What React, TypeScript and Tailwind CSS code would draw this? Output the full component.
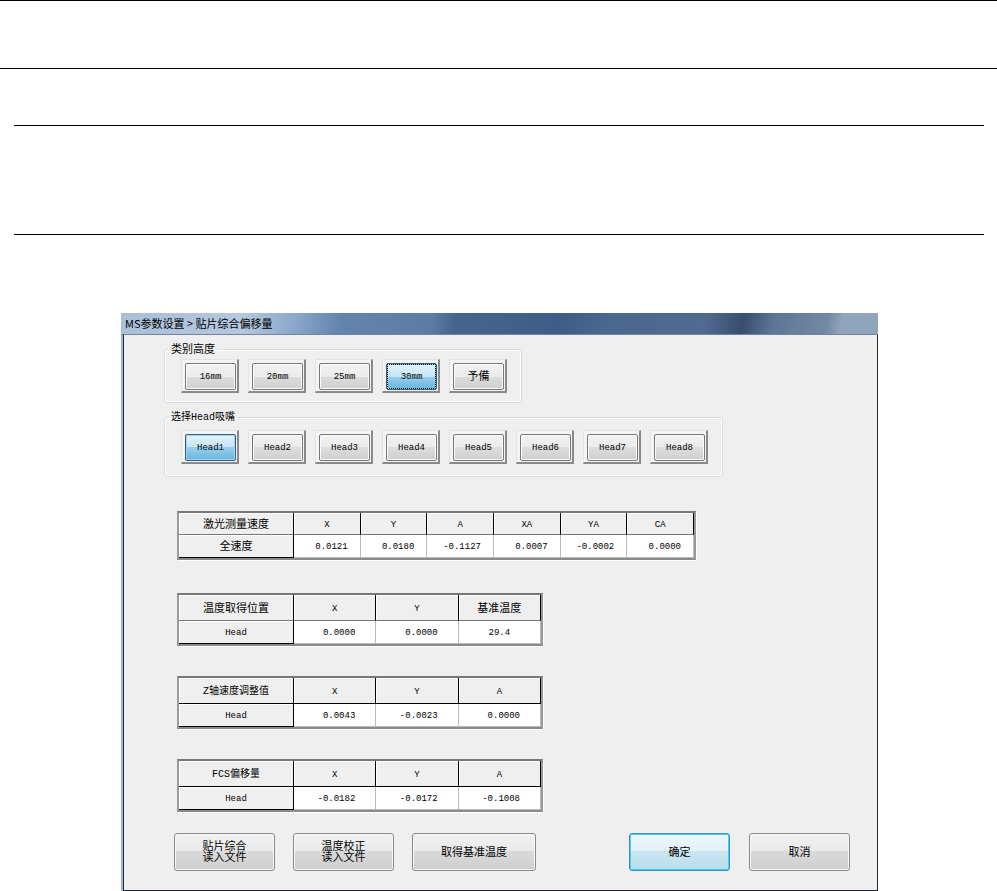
import { useState } from "react";
import clsx from "clsx";

const heights = ["16mm", "20mm", "25mm", "30mm", "予備"];
const heads = ["Head1", "Head2", "Head3", "Head4", "Head5", "Head6", "Head7", "Head8"];

type OffsetTable = {
  title: string;
  row: string;
  columns: string[];
  values: string[];
  // the full speed table is lower and has narrower columns
  compact?: boolean;
  blackRule?: boolean;
};

const tables: OffsetTable[] = [
  {
    title: "激光测量速度",
    row: "全速度",
    columns: ["X", "Y", "A", "XA", "YA", "CA"],
    values: ["0.0121", "0.0180", "-0.1127", "0.0007", "-0.0002", "0.0000"],
    compact: true
  },
  {
    title: "温度取得位置",
    row: "Head",
    columns: ["X", "Y", "基准温度"],
    values: ["0.0000", "0.0000", "29.4"]
  },
  {
    title: "Z轴速度调整值",
    row: "Head",
    columns: ["X", "Y", "A"],
    values: ["0.0043", "-0.0023", "0.0000"],
    blackRule: true
  },
  {
    title: "FCS偏移量",
    row: "Head",
    columns: ["X", "Y", "A"],
    values: ["-0.0182", "-0.0172", "-0.1008"],
    blackRule: true
  }
];

// Pure Latin text runs narrower than the Chinese labels, mixed text sits between.
function textSize(text: string) {
  if (/^[\x20-\x7f]+$/.test(text)) return "text-[9px]";
  return /[A-Za-z]/.test(text) ? "text-[10px]" : "text-[11px]";
}

function ToggleButton({
  label,
  pressed,
  focused,
  onClick
}: {
  label: string;
  pressed: boolean;
  focused?: boolean;
  onClick: () => void;
}) {
  return (
    <button
      type="button"
      aria-pressed={pressed}
      onClick={onClick}
      className="h-[34px] w-[58px] shrink-0 border-t border-r-2 border-b-2 border-l border-t-[#e3e3e3] border-r-[#8a8a8a] border-b-[#8a8a8a] border-l-[#e3e3e3] bg-[#f4f4f4] pt-[3px] pr-[1px] pb-[1px] pl-[3px]"
    >
      <span
        className={clsx(
          "flex h-full w-full items-center justify-center rounded-[2px] border pt-0.5",
          textSize(label),
          pressed
            ? "border-[#2c628b] bg-[linear-gradient(#e5f4fc,#c4e5f6_50%,#98d1ef_50%,#68b3db)] shadow-[inset_0_0_0_1px_#a5d2ec]"
            : "border-[#777777] bg-[linear-gradient(#f2f2f2,#ebebeb_50%,#dddddd_50%,#cfcfcf)] shadow-[inset_0_0_0_1px_#fafafa]",
          focused && "outline-1 -outline-offset-2 outline-dotted outline-black"
        )}
      >
        {label}
      </span>
    </button>
  );
}

function ButtonGroup({
  legend,
  options,
  value,
  onChange,
  focused,
  className
}: {
  legend: string;
  options: string[];
  value: string;
  onChange: (value: string) => void;
  focused?: boolean;
  className: string;
}) {
  return (
    <fieldset
      className={clsx(
        "ml-10 w-fit rounded-[3px] border border-[#d5dfe5] pr-[14px] pl-4 shadow-[inset_0_0_0_1px_#ffffff]",
        className
      )}
    >
      <legend className={clsx("-ml-3 px-[2px] pt-0.5 leading-[14px]", textSize(legend))}>{legend}</legend>
      <div className="flex gap-[9px]">
        {options.map((option) => (
          <ToggleButton
            key={option}
            label={option}
            pressed={option === value}
            focused={focused && option === value}
            onClick={() => onChange(option)}
          />
        ))}
      </div>
    </fieldset>
  );
}

function DataTable({ title, row, columns, values, compact, blackRule }: OffsetTable) {
  const rule = blackRule ? "border-b-black" : "border-b-[#777777]";
  const header =
    "border-r border-b border-r-black shadow-[inset_1px_1px_0_#ffffff] font-normal leading-4 p-0 pt-0.5";

  return (
    <div
      className={clsx(
        "border-2 border-t-[#777777] border-r-[#999999] border-b-[#8a8a8a] border-l-[#9a9a9a] shadow-[1px_1px_0_#ffffff]",
        compact ? "mb-[3px] w-[519px]" : "w-[366px]"
      )}
    >
      <table className="w-full table-fixed border-separate border-spacing-0">
        <thead>
          <tr className={compact ? "h-[22px]" : "h-[26px]"}>
            <th scope="col" className={clsx("w-[115px]", header, rule, textSize(title))}>
              {title}
            </th>
            {columns.map((column) => (
              <th key={column} scope="col" className={clsx(header, rule, textSize(column))}>
                {column}
              </th>
            ))}
          </tr>
        </thead>
        <tbody>
          <tr className="h-[23px]">
            <th scope="row" className={clsx(header, "border-b-black", textSize(row))}>
              {row}
            </th>
            {values.map((value, i) => (
              <td
                key={columns[i]}
                className={clsx(
                  "border-r border-b border-[#bbbbbb] bg-white p-0 pt-0.5 text-[9px] leading-4",
                  columns[i] === "基准温度" ? "text-center" : compact ? "pr-3 text-right" : "pr-5 text-right"
                )}
              >
                {value}
              </td>
            ))}
          </tr>
        </tbody>
      </table>
    </div>
  );
}

function PushButton({ lines, primary, wide }: { lines: string[]; primary?: boolean; wide?: boolean }) {
  return (
    <button
      type="button"
      className={clsx(
        "flex h-[38px] flex-col items-center justify-center rounded-[3px] border pt-0.5 text-[11px] leading-[11px]",
        wide ? "w-[124px]" : "w-[101px]",
        primary
          ? "border-[#3c8fc0] bg-[linear-gradient(#eef6fc,#e2f1f9_48%,#cbe6f2_48%,#b9dcec)] shadow-[inset_0_0_0_1px_#3fd0fb]"
          : "border-[#8a8a8a] bg-[linear-gradient(#f2f2f2,#e9e9e9_48%,#dadada_48%,#cecece)] shadow-[inset_0_0_0_1px_#f8f8f8]"
      )}
    >
      {lines.map((line) => (
        <span key={line}>{line}</span>
      ))}
    </button>
  );
}

export default function App() {
  const [height, setHeight] = useState("30mm");
  const [head, setHead] = useState("Head1");

  return (
    <div className="bg-white font-['Liberation_Mono','Noto_Sans_CJK_SC',monospace] text-black">
      <div className="h-[69px] border-y border-black" />
      <div className="mt-14 mr-[13px] ml-[14px] h-[110px] border-y border-black" />

      <main className="mt-[78px] mr-[119px] ml-[121px]">
        <header className="flex h-[22px] items-center border-b border-[#76849a] bg-[linear-gradient(100deg,#a9bfd8_0%,#b4c8de_16%,#8ba8ca_23%,#6384ae_29%,#5d7ca5_41%,#45658f_44%,#3e5c87_58%,#4a678f_64%,#506b8e_77%,#384e70_82%,#5d7696_86%,#7488a3_93%,#91a4bd_95%,#8fa5be_100%)] px-1 pb-0.5">
          <h1 className="font-['Noto_Sans_CJK_SC',sans-serif] text-[11px] leading-4">MS参数设置 &gt; 贴片综合偏移量</h1>
        </header>

        <div className="border-l-2 border-[#a3b5cb]">
          <div className="border-x border-b border-[#20293a] bg-[#efefef] pt-[6px] pb-[19px]">
            <ButtonGroup
              legend="类别高度"
              options={heights}
              value={height}
              onChange={setHeight}
              focused
              className="pt-[2px] pb-[9px]"
            />
            <ButtonGroup
              legend="选择Head吸嘴"
              options={heads}
              value={head}
              onChange={setHead}
              className="mt-[6px] pt-[5px] pb-3"
            />

            <div className="mt-[34px] ml-[53px] flex flex-col gap-[30px]">
              {tables.map((table) => (
                <DataTable key={table.title} {...table} />
              ))}
            </div>

            <div className="mt-[21px] mr-[27px] ml-[50px] flex justify-between">
              <div className="flex gap-[18px]">
                <PushButton lines={["贴片综合", "读入文件"]} />
                <PushButton lines={["温度校正", "读入文件"]} />
                <PushButton lines={["取得基准温度"]} wide />
              </div>
              <div className="flex gap-[19px]">
                <PushButton lines={["确定"]} primary />
                <PushButton lines={["取消"]} />
              </div>
            </div>
          </div>
        </div>
      </main>
    </div>
  );
}
